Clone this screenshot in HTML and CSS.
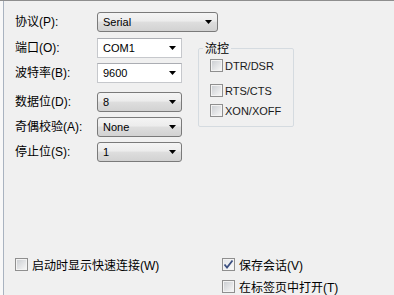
FILE: index.html
```html
<!DOCTYPE html>
<html>
<head>
<meta charset="utf-8">
<link rel="stylesheet" href="styles.css">
</head>
<body>
<div class="window">
  <div class="panel">
    <div class="row">
      <span class="lbl">协议(P):</span>
      <div class="combo list wide"><span>Serial</span><svg class="arrow" width="7" height="4" viewBox="0 0 7 4"><polygon points="0,0 7,0 3.5,4" fill="#000"/></svg></div>
    </div>
    <div class="mid">
      <div class="leftcol">
        <div class="row">
          <span class="lbl">端口(O):</span>
          <div class="combo edit"><span>COM1</span><svg class="arrow" width="7" height="4" viewBox="0 0 7 4"><polygon points="0,0 7,0 3.5,4" fill="#000"/></svg></div>
        </div>
        <div class="row">
          <span class="lbl">波特率(B):</span>
          <div class="combo edit"><span>9600</span><svg class="arrow" width="7" height="4" viewBox="0 0 7 4"><polygon points="0,0 7,0 3.5,4" fill="#000"/></svg></div>
        </div>
        <div class="row sep">
          <span class="lbl">数据位(D):</span>
          <div class="combo list"><span>8</span><svg class="arrow" width="7" height="4" viewBox="0 0 7 4"><polygon points="0,0 7,0 3.5,4" fill="#000"/></svg></div>
        </div>
        <div class="row">
          <span class="lbl">奇偶校验(A):</span>
          <div class="combo list"><span>None</span><svg class="arrow" width="7" height="4" viewBox="0 0 7 4"><polygon points="0,0 7,0 3.5,4" fill="#000"/></svg></div>
        </div>
        <div class="row">
          <span class="lbl">停止位(S):</span>
          <div class="combo list"><span>1</span><svg class="arrow" width="7" height="4" viewBox="0 0 7 4"><polygon points="0,0 7,0 3.5,4" fill="#000"/></svg></div>
        </div>
      </div>
      <fieldset class="group">
        <legend>流控</legend>
        <div class="gcheck first"><span class="cb"></span><span class="ctext">DTR/DSR</span></div>
        <div class="gcheck"><span class="cb"></span><span class="ctext">RTS/CTS</span></div>
        <div class="gcheck"><span class="cb"></span><span class="ctext">XON/XOFF</span></div>
      </fieldset>
    </div>
    <div class="bottom">
      <div class="bcheck"><span class="cb"></span><span class="btext">启动时显示快速连接(W)</span></div>
      <div class="bcheck"><span class="cb checked"><svg width="11" height="11" viewBox="0 0 11 11"><path d="M1.5 5.5 L4 8.5 L9.5 1.5" fill="none" stroke="#3b4f80" stroke-width="1.8"/></svg></span><span class="btext">保存会话(V)</span></div>
      <div></div>
      <div class="bcheck"><span class="cb"></span><span class="btext">在标签页中打开(T)</span></div>
    </div>
  </div>
</div>
</body>
</html>
```
FILE: styles.css
```css
html, body {
  margin: 0;
  padding: 0;
}
body {
  width: 394px;
  height: 295px;
  overflow: hidden;
  background: #f0f0f0;
  font-family: "Liberation Sans", "Noto Sans CJK SC", sans-serif;
  font-size: 12px;
  color: #000;
}
.window {
  box-sizing: border-box;
  height: 295px;
  border-top: 1px solid #8e8e8e;
  padding-left: 3px;
  background: #f8f8f8;
}
.panel {
  box-sizing: border-box;
  height: 100%;
  border-left: 1px solid #a9b3c0;
  background: #f0f0f0;
  padding: 11px 0 0 11px;
  display: flex;
  flex-direction: column;
}
.row {
  display: flex;
  align-items: center;
  height: 20px;
}
.lbl {
  width: 82px;
  font-size: 12px;
  line-height: 20px;
  white-space: nowrap;
}
.combo {
  box-sizing: border-box;
  width: 85px;
  height: 20px;
  display: flex;
  align-items: center;
  justify-content: space-between;
  padding: 0 5px 0 5px;
  font-size: 11px;
}
.combo.wide {
  width: 121px;
}
.combo.list {
  border: 1px solid #7a7a7a;
  border-radius: 3px;
  background: linear-gradient(#f4f4f4 0%, #ececec 45%, #dedede 50%, #d2d2d2 100%);
}
.combo.edit {
  border: 1px solid #c6c8cc;
  border-top-color: #abadb3;
  background: #fff;
}
.arrow {
  display: block;
  flex: none;
}
.mid {
  display: flex;
  align-items: flex-start;
  margin-top: 6px;
}
.leftcol {
  display: flex;
  flex-direction: column;
  gap: 5px;
}
.row.sep {
  margin-top: 4px;
}
.group {
  box-sizing: border-box;
  width: 96px;
  height: 85px;
  margin: 4px 0 0 16px;
  padding: 5px 0 0 11px;
  border: 1px solid #d5dbe0;
  border-radius: 2px;
  display: flex;
  flex-direction: column;
  gap: 7px;
}
.group legend {
  font-size: 12px;
  line-height: 12px;
  padding: 0 2px;
  margin-left: -7px;
  font-family: "Noto Sans CJK SC", sans-serif;
}
.gcheck {
  display: flex;
  align-items: center;
  height: 13px;
}
.gcheck.first {
  margin-bottom: 5px;
}
.ctext {
  margin-left: 2px;
  font-size: 11px;
  color: #1a1a1a;
}
.cb {
  box-sizing: border-box;
  width: 13px;
  height: 13px;
  flex: none;
  border: 1px solid #8f8f8f;
  box-shadow: inset 0 0 0 1px #f3f3f3;
  background: linear-gradient(135deg, #cdd0d4 10%, #f5f5f5 90%);
  display: flex;
  align-items: center;
  justify-content: center;
}
.cb.checked {
  background: linear-gradient(135deg, #e4e6ea 10%, #f8f8f8 90%);
}
.cb svg {
  display: block;
}
.bottom {
  margin-top: auto;
  margin-bottom: 2px;
  display: grid;
  grid-template-columns: 207px auto;
  row-gap: 9px;
}
.bcheck {
  display: flex;
  align-items: center;
  height: 13px;
}
.btext {
  margin-left: 4px;
  font-size: 12px;
  white-space: nowrap;
}
```
